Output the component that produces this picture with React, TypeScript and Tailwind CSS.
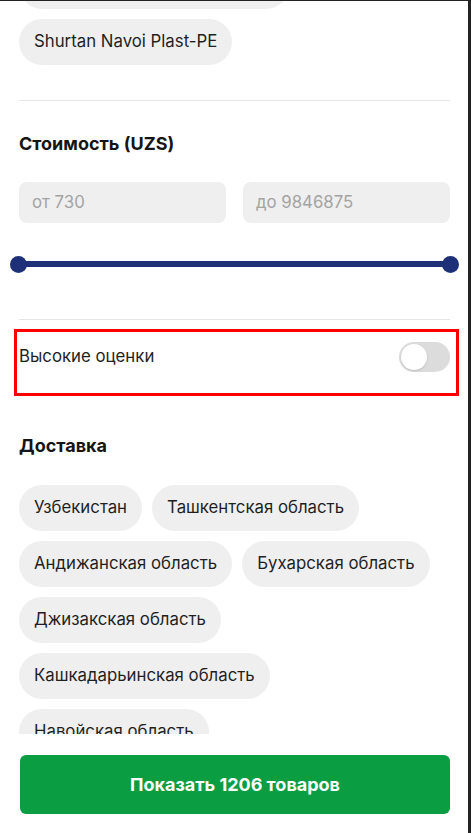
import React from 'react';

const brands = ['Navoiyazot Polymer Group UZ', 'Shurtan Navoi Plast-PE'];

const regions = [
  'Узбекистан',
  'Ташкентская область',
  'Андижанская область',
  'Бухарская область',
  'Джизакская область',
  'Кашкадарьинская область',
  'Навойская область',
];

function Chip({ label }: { label: string }) {
  return (
    <span className="inline-flex h-[46px] items-center rounded-full bg-[#efefef] px-[15px] text-[16.8px] text-[#1f1f1f]">
      {label}
    </span>
  );
}

export default function App() {
  return (
    <div
      className="flex h-[833px] w-[471px] flex-col overflow-hidden border-t border-r-[3px] border-[#222] bg-white"
      style={{ fontFamily: 'Inter, "Noto Sans", sans-serif' }}
    >
      <div className="flex-1 overflow-hidden">
        <div className="-mt-[38px] pl-[19px] pr-[18px]">
          {/* brands */}
          <div className="flex flex-wrap gap-[10px] pb-[35px]">
            {brands.map((b) => (
              <Chip key={b} label={b} />
            ))}
          </div>
          <div className="h-px bg-[#e6e6e6]" />

          {/* price */}
          <h3 className="mt-[31px] text-[18px] leading-6 font-bold text-[#151515]">Стоимость (UZS)</h3>
          <div className="mt-[26px] flex gap-[17px]">
            <div className="flex h-[41px] flex-1 items-center rounded-lg bg-[#efefef] px-[13px] text-[16.8px] text-[#a3a3a3]">
              от 730
            </div>
            <div className="flex h-[41px] flex-1 items-center rounded-lg bg-[#efefef] px-[13px] text-[16.8px] text-[#a3a3a3]">
              до 9846875
            </div>
          </div>
          <div className="relative mt-[33px] h-4">
            <div className="absolute top-[5px] right-0 left-0 h-[6px] bg-[#1d3078]" />
            <div className="absolute top-0 -left-[9px] h-[17px] w-[17px] rounded-full bg-[#1d3078]" />
            <div className="absolute top-0 -right-[9px] h-[17px] w-[17px] rounded-full bg-[#1d3078]" />
          </div>
          <div className="mt-[47px] h-px bg-[#e6e6e6]" />

          {/* rating toggle */}
          <div className="mt-[9px] -mr-[9px] -ml-[5px] border-[3px] border-[#ff0000] pt-[10px] pr-[6px] pb-[21px] pl-[2px]">
            <div className="flex items-center justify-between">
              <span className="text-[16.8px] text-[#1f1f1f]">Высокие оценки</span>
              <div className="flex h-[30px] w-[51px] items-center rounded-full bg-[#dcdcdc] p-[2px]">
                <div className="h-[26px] w-[26px] rounded-full bg-white shadow-sm" />
              </div>
            </div>
          </div>

          {/* delivery */}
          <h3 className="mt-[38px] text-[18px] leading-6 font-bold text-[#151515]">Доставка</h3>
          <div className="mt-[27px] flex flex-wrap gap-[10px]">
            {regions.map((r) => (
              <Chip key={r} label={r} />
            ))}
          </div>
        </div>
      </div>

      <div className="shrink-0 bg-white pt-[21px] pr-[18px] pb-[19px] pl-[20px]">
        <button className="h-[59px] w-full rounded-md bg-[#0a9d42] text-[18px] font-bold text-white">
          Показать 1206 товаров
        </button>
      </div>
    </div>
  );
}
